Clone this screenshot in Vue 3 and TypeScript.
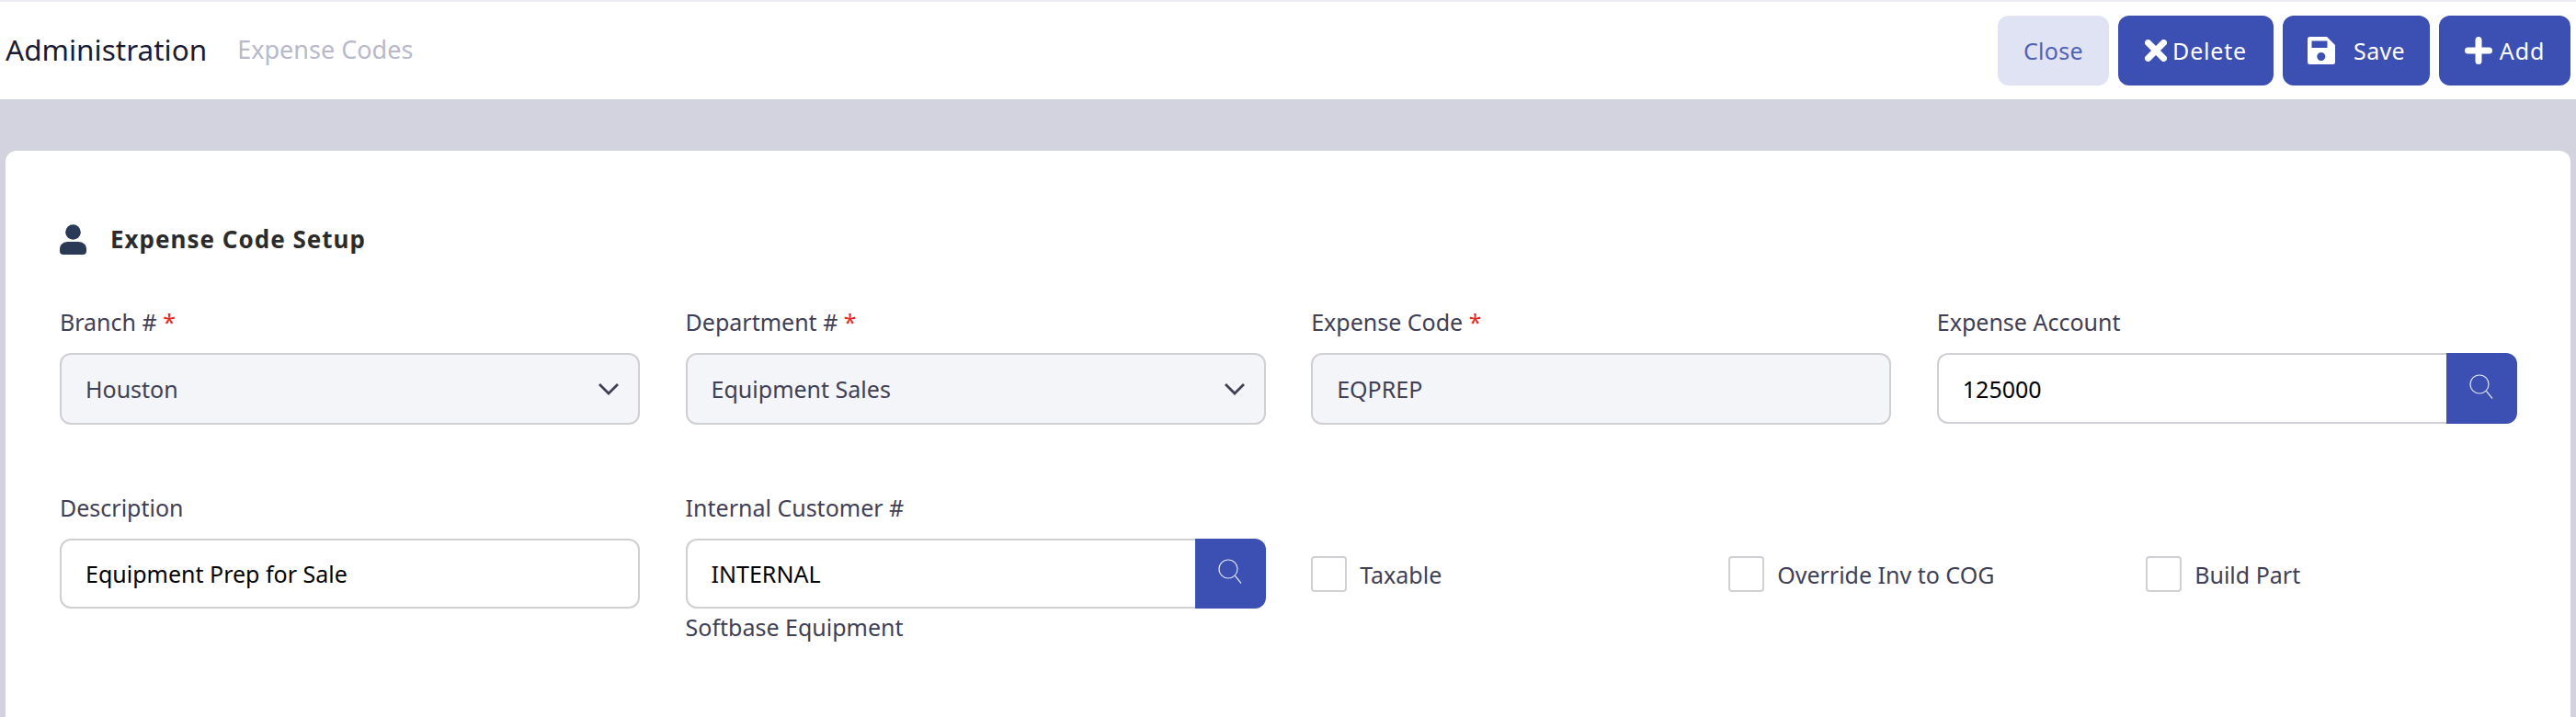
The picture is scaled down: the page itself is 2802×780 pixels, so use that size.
<script setup lang="ts">
const branchFields = [
  { label: 'Branch #', value: 'Houston' },
  { label: 'Department #', value: 'Equipment Sales' },
]
const checks = ['Taxable', 'Override Inv to COG', 'Build Part']
</script>

<template>
  <div class="page">
    <header class="topbar">
      <div class="crumbs">
        <span class="crumb-main">Administration</span>
        <span class="crumb-sub">Expense Codes</span>
      </div>
      <div class="actions">
        <button class="btn btn-light btn-close">Close</button>
        <button class="btn btn-delete">
          <svg width="24" height="24" viewBox="0 0 24 24"><path d="M3.5 3.5 L20.5 20.5 M20.5 3.5 L3.5 20.5" stroke="#fff" stroke-width="7" stroke-linecap="round" fill="none" /></svg>
          Delete
        </button>
        <button class="btn btn-save">
          <svg width="30" height="30" viewBox="0 0 30 30"><path fill="#fff" fill-rule="evenodd" d="M2.5 0 H21 L30 9 V27.5 a2.5 2.5 0 0 1 -2.5 2.5 H2.5 a2.5 2.5 0 0 1 -2.5 -2.5 V2.5 a2.5 2.5 0 0 1 2.5 -2.5 Z M4.5 4.5 V12 H21.5 V4.5 Z M14.8 17 a4.5 4.5 0 1 0 0.01 0 Z" /></svg>
          Save
        </button>
        <button class="btn btn-add">
          <svg width="30" height="30" viewBox="0 0 30 30"><path d="M15 3.5 V26.5 M3.5 15 H26.5" stroke="#fff" stroke-width="7" stroke-linecap="round" fill="none" /></svg>
          Add
        </button>
      </div>
    </header>

    <div class="content">
      <section class="card">
        <div class="card-title">
          <svg width="29" height="33" viewBox="0 0 29 33"><circle cx="14.5" cy="8.5" r="8.3" fill="#2a3a56" /><path fill="#2a3a56" d="M0 29 V27 C0 22 4 19 9 19 H20 C25 19 29 22 29 27 V29 a4 4 0 0 1 -4 4 H4 a4 4 0 0 1 -4 -4 Z" /></svg>
          <h2>Expense Code Setup</h2>
        </div>

        <div class="form-grid">
          <div v-for="f in branchFields" :key="f.label" class="field">
            <label>{{ f.label }} <span class="req">*</span></label>
            <div class="control control-fill">
              <span>{{ f.value }}</span>
              <svg class="chev" width="24" height="14" viewBox="0 0 24 14"><path d="M2 2 L12 12 L22 2" stroke="#3f4055" stroke-width="2.8" fill="none" /></svg>
            </div>
          </div>

          <div class="field">
            <label>Expense Code <span class="req">*</span></label>
            <div class="control control-fill"><span>EQPREP</span></div>
          </div>

          <div class="field">
            <label>Expense Account</label>
            <div class="lookup lookup-tall">
              <div class="control control-input"><span>125000</span></div>
              <button class="lookup-btn">
                <svg width="28" height="30" viewBox="0 0 28 30"><circle cx="12" cy="12" r="10" stroke="#dfe3f3" stroke-width="1.2" fill="none" /><path d="M19.5 19.5 L26 27.5" stroke="#dfe3f3" stroke-width="1.2" /></svg>
              </button>
            </div>
          </div>

          <div class="field row-two">
            <label>Description</label>
            <div class="control control-input"><span>Equipment Prep for Sale</span></div>
          </div>

          <div class="field row-two">
            <label>Internal Customer #</label>
            <div class="lookup">
              <div class="control control-input"><span>INTERNAL</span></div>
              <button class="lookup-btn">
                <svg width="28" height="30" viewBox="0 0 28 30"><circle cx="12" cy="12" r="10" stroke="#dfe3f3" stroke-width="1.2" fill="none" /><path d="M19.5 19.5 L26 27.5" stroke="#dfe3f3" stroke-width="1.2" /></svg>
              </button>
            </div>
            <div class="hint">Softbase Equipment</div>
          </div>

          <div class="checks">
            <label v-for="c in checks" :key="c" class="check">
              <span class="box"></span>
              {{ c }}
            </label>
          </div>
        </div>
      </section>
    </div>
  </div>
</template>

<style>
html, body {
  margin: 0;
  background: #d3d3df;
}
</style>

<style scoped>
.page {
  width: 2802px;
  height: 780px;
  overflow: hidden;
  font-family: "Noto Sans", "Open Sans", sans-serif;
  color: #3f4055;
}

.topbar {
  box-sizing: border-box;
  height: 108px;
  background: #fff;
  border-top: 2px solid #ebebf3;
  display: flex;
  align-items: flex-start;
  justify-content: space-between;
  padding: 15px 6px 0;
}
.crumbs {
  display: flex;
  align-items: center;
  gap: 33px;
  padding-top: 17px;
}
.crumb-main {
  font-size: 31.5px;
  line-height: 40px;
  color: #1a1b33;
}
.crumb-sub {
  font-size: 27px;
  line-height: 40px;
  color: #b9b9cc;
}
.actions {
  display: flex;
  gap: 10px;
}
.btn {
  box-sizing: border-box;
  height: 76px;
  border: 0;
  border-radius: 12px;
  background: #3b50b2;
  color: #fff;
  font: inherit;
  font-size: 25px;
  letter-spacing: 0.3px;
  display: flex;
  align-items: center;
  justify-content: center;
  padding: 0;
}
.btn-light {
  background: #dfe3f3;
  color: #4f62b8;
}
.btn-close { width: 121px; }
.btn-delete { width: 169px; gap: 6px; letter-spacing: 0.8px; }
.btn-save { width: 160px; gap: 20px; }
.btn-add { width: 143px; gap: 8px; letter-spacing: 0.9px; }

.content {
  padding: 56px 6px 0;
}
.card {
  background: #fff;
  border-radius: 12px;
  height: 640px;
  padding: 80px 58px 0 59px;
}
.card-title {
  display: flex;
  align-items: center;
  gap: 26px;
  height: 33px;
}
.card-title h2 {
  margin: -2px 0 0;
  font-size: 26px;
  font-weight: 700;
  letter-spacing: 1px;
  color: #2b2b2b;
}

.form-grid {
  display: grid;
  grid-template-columns: repeat(4, 631px);
  column-gap: 49.6px;
  margin-top: 55px;
}
.field label {
  display: block;
  font-size: 25px;
  line-height: 34px;
  padding-top: 1px;
  margin-bottom: 17px;
  color: #3f4055;
}
.req {
  color: #e8281e;
}
.row-two {
  margin-top: 72px;
}
.control {
  box-sizing: border-box;
  height: 78px;
  border: 2px solid #d0d0d4;
  border-radius: 12px;
  display: flex;
  align-items: center;
  justify-content: space-between;
  padding: 0 26px;
  font-size: 25px;
}
.control-fill {
  background: #f4f5f9;
  color: #3f4055;
}
.control-input {
  background: #fff;
  color: #000;
  height: 76px;
}
.chev {
  margin-right: -6px;
}
.lookup {
  display: flex;
  height: 76px;
}
.lookup-tall {
  height: 77px;
}
.lookup .control {
  flex: 1;
  height: 100%;
  border-right: 0;
  border-radius: 12px 0 0 12px;
}
.lookup-btn {
  width: 77px;
  height: 100%;
  border: 0;
  padding: 0 0 4px;
  border-radius: 0 12px 12px 0;
  background: #3b50b2;
  display: flex;
  align-items: center;
  justify-content: center;
}
.hint {
  font-size: 25px;
  line-height: 34px;
  margin-top: 3px;
}
.checks {
  grid-column: span 2;
  display: grid;
  grid-template-columns: repeat(3, 454px);
  margin-top: 143px;
  align-self: start;
}
.check {
  display: flex;
  align-items: center;
  gap: 14px;
  font-size: 25px;
  height: 39px;
}
.box {
  box-sizing: border-box;
  width: 39px;
  height: 39px;
  border: 2px solid #d0d0d4;
  border-radius: 4px;
  background: #fff;
}
</style>
